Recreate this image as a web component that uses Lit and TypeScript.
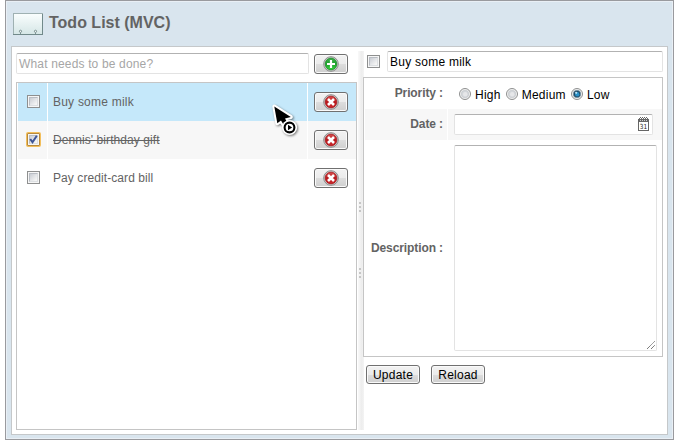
import { LitElement, html, css, svg } from "lit";
import { customElement, property, state } from "lit/decorators.js";
import { classMap } from "lit/directives/class-map.js";

@customElement("todo-check")
class TodoCheck extends LitElement {
  @property({ type: Boolean }) checked = false;
  static styles = css`
    :host { display: block; width: 13px; height: 13px; flex: none; }
    .box { box-sizing: border-box; width: 13px; height: 13px; border: 1px solid #8e8f8f; background: #f6f6f6; display: grid; place-items: center; position: relative; }
    .inner { box-sizing: border-box; width: 9px; height: 9px; border: 1px solid #b9bdc4; border-right-color: #dcdfe2; border-bottom-color: #dcdfe2; background: linear-gradient(135deg, #c9cdd4, #f4f4f4 85%); }
    .on { border-color: #b88a3c; box-shadow: 0 0 0 1px #f3bf5c; border-radius: 1px; }
    svg { position: absolute; left: 0; top: 0; width: 11px; height: 11px; }
  `;
  render() {
    return html`<div class=${classMap({ box: true, on: this.checked })}>
      <div class="inner"></div>
      ${this.checked ? html`<svg viewBox="0 0 11 11"><path d="M2.2 5 L4.5 8.2 L8.8 1.8" fill="none" stroke="#3d5596" stroke-width="2"/></svg>` : ""}
    </div>`;
  }
}

@customElement("todo-icon-button")
class TodoIconButton extends LitElement {
  @property() kind = "delete";
  static styles = css`
    :host { display: block; flex: none; width: 34px; height: 20px; }
    button { box-sizing: border-box; width: 34px; height: 20px; padding: 0; border: 1px solid #707070; border-radius: 3px; box-shadow: inset 0 0 0 1px #fafafa; background: linear-gradient(#f2f2f2 0%, #ebebeb 50%, #dddddd 50%, #cfcfcf 100%); display: flex; align-items: center; justify-content: center; }
    svg { width: 16px; height: 16px; display: block; flex: none; }
  `;
  render() {
    const add = this.kind === "add";
    return html`<button aria-label=${this.kind}>
      <svg viewBox="0 0 16 16">
        <defs><linearGradient id="g" x1="0" y1="0" x2="0" y2="1">
          <stop offset="0" stop-color=${add ? "#3fb04a" : "#d85050"}/>
          <stop offset=".5" stop-color=${add ? "#1da02c" : "#b8181c"}/>
          <stop offset="1" stop-color=${add ? "#37d63e" : "#cc2a2e"}/>
        </linearGradient></defs>
        <circle cx="8" cy="8" r="7.3" fill="#d4d4d4" stroke="#8c8c8c" stroke-width="1"/>
        <circle cx="8" cy="8" r="5.9" fill="url(#g)" stroke=${add ? "#168a24" : "#a01418"} stroke-width=".7"/>
        ${add
          ? svg`<path d="M8 4v8M4 8h8" stroke="#fff" stroke-width="2.2"/>`
          : svg`<path d="M5 5l6 6M11 5l-6 6" stroke="#fff" stroke-width="2.6"/>`}
      </svg></button>`;
  }
}

interface Todo { text: string; done: boolean; }

@customElement("app-root")
class AppRoot extends LitElement {
  @state() private todos: Todo[] = [
    { text: "Buy some milk", done: false },
    { text: "Dennis' birthday gift", done: true },
    { text: "Pay credit-card bill", done: false },
  ];
  @state() private selected = 0;
  @state() private priority = "Low";

  static styles = css`
    :host { display: block; width: 679px; height: 440px; box-sizing: border-box; padding-left: 5px; background: #fff; position: relative; overflow: hidden; font: 12px "Liberation Sans", Arial, sans-serif; color: #636363; }
    * { box-sizing: border-box; }
    .window { width: 669px; height: 440px; border: 1px solid #999a9e; background: #d9e5ee; box-shadow: inset 0 0 0 1px #e9eff5; padding: 0 5px; }
    .header { height: 45px; display: flex; align-items: center; gap: 6px; padding-left: 2px; }
    .logo { width: 30px; height: 22px; margin-top: 1px; display: block; }
    .title { font-size: 16px; font-weight: bold; line-height: 20px; margin-top: -1px; }
    .body { width: 657px; height: 389px; border: 1px solid #c5c8ca; background: #fff; display: flex; padding: 4px; }
    .left { width: 341px; display: flex; flex-direction: column; padding-top: 2px; }
    .entry { display: flex; gap: 5px; height: 29px; }
    .entry todo-icon-button { margin-top: 1px; }
    .input { height: 21px; border: 1px solid #e3e3e3; border-top-color: #b2b2b2; border-radius: 2px; background: #fff; line-height: 21px; padding-left: 2px; white-space: nowrap; letter-spacing: .16px; }
    .new { width: 293px; color: #a6a6a6; }
    .list { height: 348px; border: 1px solid #c5c5c5; padding-left: 1px; }
    .row { display: grid; grid-template-columns: 29px 259px 48px; column-gap: 1px; height: 38px; }
    .cell { display: flex; align-items: center; background: #fff; padding-left: 5px; letter-spacing: .08px; }
    .cell.first { padding: 0 0 1px 9px; }
    .cell.last { padding-left: 6px; }
    .odd .cell { background: #f7f7f7; }
    .sel .cell { background: #c5e8fa; letter-spacing: .22px; }
    .done { text-decoration: line-through; }
    .split { width: 6px; margin-left: 1px; height: 379px; background: linear-gradient(90deg, #f9f9f9, #ededed 60%, #f4f4f4); display: flex; flex-direction: column; align-items: flex-start; gap: 56px; padding: 151px 0 0 1px; }
    .dots { width: 2px; height: 10px; background: repeating-linear-gradient(#c6c6c6 0 2px, transparent 2px 4px); }
    .right { width: 300px; margin-left: -1px; }
    .heading { display: flex; gap: 7px; height: 26px; padding-left: 4px; }
    .heading todo-check { margin-top: 4px; }
    .heading .input { width: 276px; color: #000; letter-spacing: .25px; }
    .form { height: 280px; border: 1px solid #c5c5c5; padding-left: 1px; display: grid; grid-template-columns: 82px 214px; column-gap: 1px; grid-template-rows: 31px 31px 216px; }
    .label { display: flex; align-items: center; justify-content: flex-end; padding: 0 4px 1px 0; font-weight: bold; letter-spacing: -.1px; }
    .label.last { padding-bottom: 0; }
    .field { padding: 5px 0 0 6px; }
    .grey { background: #f7f7f7; }
    .radios { display: flex; align-items: center; color: #000; padding: 1px 0 0 11px; }
    .radios span { margin: 2px 5px 0 4px; letter-spacing: .25px; }
    .radio { width: 12px; height: 12px; flex: none; display: block; margin-top: -1px; }
    .date { width: 199px; display: flex; justify-content: flex-end; padding: 1px 3px 0 0; }
    .cal { width: 11px; height: 14px; display: block; margin-top: 1px; }
    .area { width: 203px; height: 206px; border: 1px solid #e3e3e3; border-top-color: #b2b2b2; border-radius: 2px; display: flex; align-items: flex-end; justify-content: flex-end; background: #fff; }
    .grip { width: 9px; height: 9px; }
    .actions { display: flex; gap: 11px; padding: 8px 0 0 3px; }
    .btn { width: 54px; height: 19px; padding: 0; border: 1px solid #707070; border-radius: 3px; box-shadow: inset 0 0 0 1px #fafafa; background: linear-gradient(#f2f2f2 0%, #ebebeb 50%, #dddddd 50%, #cfcfcf 100%); font: 12px "Liberation Sans", Arial, sans-serif; color: #000; letter-spacing: .25px; white-space: nowrap; }
    .cursor { position: absolute; left: 269px; top: 101px; width: 32px; height: 38px; filter: drop-shadow(1px 1px 1px rgba(0,0,0,.5)); }
  `;

  private radio(on: boolean) {
    return html`<svg class="radio" viewBox="0 0 12 12">
      <circle cx="6" cy="6" r="5.5" fill="#f4f4f4" stroke="#8e8f8f"/>
      <circle cx="6" cy="6" r="3.8" fill=${on ? "#1c4a68" : "#d3d6da"} stroke=${on ? "#8fa3b0" : "#c0c4c8"} stroke-width=".6"/>
      <circle cx="6.2" cy="6.2" r="2.2" fill=${on ? "#2b91c8" : "#e6e7e9"}/>
      ${on ? svg`<circle cx="5.2" cy="4.8" r="1.1" fill="#b9e4f5"/>` : ""}
    </svg>`;
  }

  render() {
    return html`
      <div class="window">
        <div class="header">
          <svg class="logo" viewBox="0 0 30 22">
            <defs><linearGradient id="lg" x1="0" y1="0" x2="0" y2="1"><stop offset="0" stop-color="#fafefe"/><stop offset="1" stop-color="#d5e6e6"/></linearGradient></defs>
            <rect x=".5" y=".5" width="29" height="21" fill="url(#lg)" stroke="#9fb1b2"/>
            <path d="M0 21.5h30M29.5 1v21" stroke="#71898a"/>
            <circle cx="7.5" cy="18.3" r="1.1" fill="#fff" stroke="#6d8485" stroke-width=".9"/>
            <circle cx="22.5" cy="18.3" r="1.1" fill="#fff" stroke="#6d8485" stroke-width=".9"/>
            <path d="M7.5 19.6v1.4M22.5 19.6v1.4" stroke="#7d9394"/>
          </svg>
          <div class="title">Todo List (MVC)</div>
        </div>
        <div class="body">
          <div class="left">
            <div class="entry"><div class="input new">What needs to be done?</div><todo-icon-button kind="add"></todo-icon-button></div>
            <div class="list">
              ${this.todos.map((t, i) => html`
                <div class=${classMap({ row: true, odd: i % 2 === 1, sel: i === this.selected })} @click=${() => (this.selected = i)}>
                  <div class="cell first"><todo-check ?checked=${t.done}></todo-check></div>
                  <div class="cell"><span class=${classMap({ done: t.done })}>${t.text}</span></div>
                  <div class="cell last"><todo-icon-button kind="delete"></todo-icon-button></div>
                </div>`)}
            </div>
          </div>
          <div class="split"><div class="dots"></div><div class="dots"></div></div>
          <div class="right">
            <div class="heading"><todo-check></todo-check><div class="input">${this.todos[this.selected].text}</div></div>
            <div class="form">
              <div class="label">Priority :</div>
              <div class="radios">${["High", "Medium", "Low"].map((p) => html`${this.radio(p === this.priority)}<span>${p}</span>`)}</div>
              <div class="label grey">Date :</div>
              <div class="field grey"><div class="input date">
                <svg class="cal" viewBox="0 0 11 14" shape-rendering="crispEdges">
                  <path d="M0 2h11v12h-11z" fill="#666"/><path d="M1 5h9v8h-9z" fill="#fff"/>
                  <path d="M1 1h1v1h-1zM3 1h1v1h-1zM5 1h1v1h-1zM7 1h1v1h-1zM9 1h1v1h-1zM2 0h1v1h-1zM4 0h1v1h-1zM6 0h1v1h-1zM8 0h1v1h-1z" fill="#666"/>
                  <path d="M2 3h1v1h-1zM4 3h1v1h-1zM6 3h1v1h-1zM8 3h1v1h-1z" fill="#ccc"/>
                  <text x="1.8" y="11.6" font-size="7" textLength="7.6" lengthAdjust="spacingAndGlyphs" font-family="DejaVu Sans, sans-serif" fill="#222">31</text>
                </svg></div></div>
              <div class="label last">Description :</div>
              <div class="field"><div class="area"><svg class="grip" viewBox="0 0 9 9"><path d="M0 8L8 0M4 8L8 4" stroke="#555" stroke-dasharray="1.1 .5"/></svg></div></div>
            </div>
            <div class="actions"><button class="btn">Update</button><button class="btn">Reload</button></div>
          </div>
        </div>
      </div>
      <svg class="cursor" viewBox="0 0 32 38">
        <path d="M5.3 5.5L8.3 22.3L12 19.4L15.4 25L19 22.8L16 17.6L21.8 16Z" fill="#000" stroke="#fff" stroke-width="4" stroke-linejoin="round" paint-order="stroke"/>
        <circle cx="20.5" cy="26.5" r="7.6" fill="#fff"/>
        <circle cx="20.5" cy="26.5" r="4.9" fill="#fff" stroke="#000" stroke-width="2.1"/>
        <path d="M19 23.7v5.6l4.1-2.8z" fill="#000"/>
      </svg>`;
  }
}
